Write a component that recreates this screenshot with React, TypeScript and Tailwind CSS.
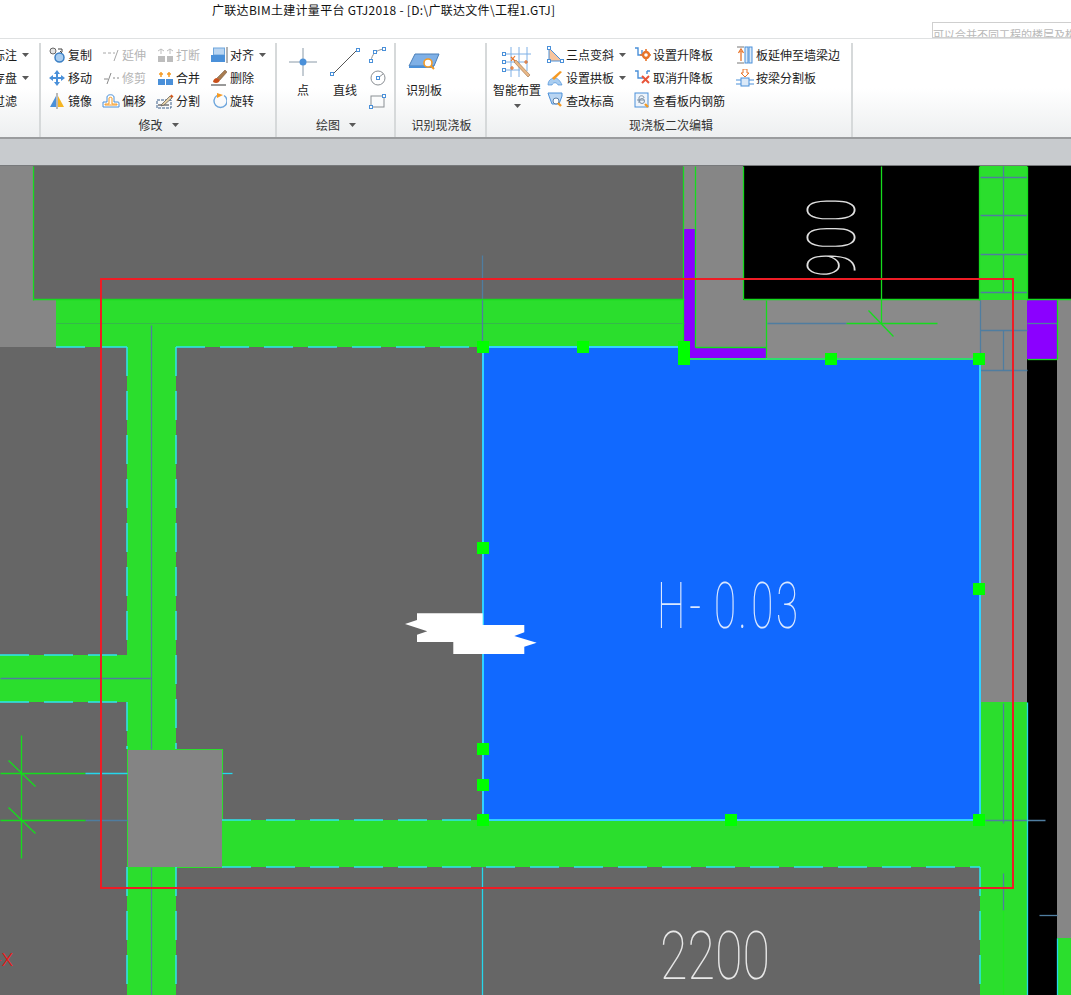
import type { ReactNode } from "react"

const blue = "#4a90d9"
const orange = "#f59a23"

const Ico = ({ children, w = 16, h = 16 }: { children: ReactNode; w?: number; h?: number }) => (
  <svg width={w} height={h} viewBox={`0 0 ${w} ${h}`} className="shrink-0" fill="none">
    {children}
  </svg>
)

const Copy = () => (
  <Ico>
    <circle cx="4" cy="4" r="3" fill="#e4e4e4" stroke="#666" />
    <circle cx="10.5" cy="10.5" r="4.5" fill="#a9cdf0" stroke="#3a7fc4" strokeWidth="1.5" />
    <path d="M9 2h4v3M11 4l2 2" stroke="#444" />
  </Ico>
)
const Extend = () => (
  <Ico>
    <path d="M0 6h3M5 6h3M10 6h2" stroke="#a8a8a8" />
    <path d="M11 14L15 3" stroke="#a8a8a8" />
  </Ico>
)
const Break = () => (
  <Ico>
    <rect x="1" y="9" width="7" height="6" fill="#bdbdbd" />
    <rect x="10" y="9" width="6" height="6" fill="#bdbdbd" />
    <path d="M4 2v5M1 4l3-2 3 2M13 2v5M10 4l3-2 3 2" stroke="#bdbdbd" />
  </Ico>
)
const Align = () => (
  <Ico w={18} h={16}>
    <rect x="3.5" y="1" width="11" height="7" fill="#b9d5f2" stroke="#6ea6dc" />
    <rect x="1" y="8" width="14" height="7" fill={blue} />
    <path d="M17 0v16" stroke="#666" />
  </Ico>
)
const Move = () => (
  <Ico>
    <path d="M8 3v10M3 8h10" stroke={blue} strokeWidth="2" />
    <path d="M8 0l3 4H5zM8 16l3-4H5zM0 8l4-3v6zM16 8l-4-3v6z" fill={blue} />
  </Ico>
)
const Trim = () => (
  <Ico>
    <path d="M1 9h4M10 8h2M14 8h2" stroke="#8a8a8a" />
    <path d="M4 14L8 3" stroke="#8a8a8a" />
  </Ico>
)
const Merge = () => (
  <Ico>
    <rect x="1" y="9" width="7" height="6" fill={blue} />
    <rect x="9" y="9" width="7" height="6" fill={blue} />
    <path d="M4 2v5M2 4h4M12 2v5M10 4h4" stroke={orange} strokeWidth="1.5" />
  </Ico>
)
const Del = () => (
  <Ico>
    <path d="M6 8l8-8 2 2-7 8z" fill="#a87c50" stroke="#6b5138" strokeWidth="0.5" />
    <path d="M2 12c0-2 2-4 4-4l3 2c-1 3-4 4-7 2z" fill="#c9501a" />
    <path d="M0 15h15" stroke="#333" />
  </Ico>
)
const Mirror = () => (
  <Ico>
    <path d="M1 14L7 3v11z" fill={blue} />
    <path d="M8 0v16" stroke="#777" />
    <path d="M9 3l6 11H9z" fill="#f5b523" />
  </Ico>
)
const Offset = () => (
  <Ico w={18} h={16}>
    <path d="M1 14V9h4V4c0-3 7-3 7 0v5h4a1 1 0 011 1v4z" fill="#fff" stroke={blue} />
    <path d="M3 12v-1h4V5c0-1 3-1 3 0v6h5v1z" stroke={orange} />
  </Ico>
)
const Split = () => (
  <Ico w={18} h={16}>
    <path d="M1 7h14v8H1z" stroke="#3b5f8a" strokeDasharray="3 1" />
    <path d="M2 12h11" stroke="#333" />
    <path d="M6 11l8-8 2 2-8 7-3 1z" fill="#e9d3a8" stroke="#555" strokeWidth="0.7" />
    <path d="M14 3l1.5-1.5 2 2L16 5z" fill="#d4581c" />
  </Ico>
)
const Rotate = () => (
  <Ico>
    <path d="M6 2.5a6.5 6.5 0 107 0" stroke="#6ea6dc" strokeWidth="1.4" />
    <path d="M6 0l6 2-6 3z" fill={orange} />
  </Ico>
)

const Sq = ({ x, y }: { x: number; y: number }) => (
  <rect x={x - 1.5} y={y - 1.5} width="3" height="3" fill="#fff" stroke={blue} />
)
const PointIcon = () => (
  <Ico w={30} h={30}>
    <path d="M15 1v28M1 15h28" stroke="#8a9aa8" />
    <circle cx="15" cy="15" r="3.5" fill={blue} />
  </Ico>
)
const LineIcon = () => (
  <Ico w={30} h={30}>
    <path d="M2 28L28 2" stroke="#555" />
    <rect x="0.5" y="25.5" width="3" height="3" fill="#fff" stroke={blue} />
    <rect x="26.5" y="1.5" width="3" height="3" fill="#fff" stroke={blue} />
  </Ico>
)
const ArcIcon = () => (
  <Ico w={18} h={18}>
    <path d="M2 15C3 8 7 4 15 3" stroke="#8a8f94" />
    <Sq x={2} y={15} />
    <Sq x={6} y={6} />
    <Sq x={15} y={3} />
  </Ico>
)
const CircleIcon = () => (
  <Ico w={18} h={18}>
    <circle cx="9" cy="9" r="7" stroke="#8a8f94" />
    <path d="M9 9l5-4" stroke="#8a8f94" />
    <Sq x={9} y={9} />
  </Ico>
)
const RectIcon = () => (
  <Ico w={18} h={18}>
    <rect x="2" y="4" width="13" height="11" stroke="#8a8f94" />
    <Sq x={2} y={15} />
    <Sq x={15} y={4} />
  </Ico>
)
const RecogIcon = () => (
  <Ico w={32} h={18}>
    <path d="M7 1h24l-5 12H1z" fill="#7fb0e6" stroke="#4a7fb8" />
    <path d="M1 13h25v2H1z" fill={blue} />
    <circle cx="20" cy="10" r="4" fill="#fff" stroke={orange} strokeWidth="1.6" />
    <path d="M23 13l3 3" stroke={orange} strokeWidth="2" />
  </Ico>
)
const SmartIcon = () => (
  <Ico w={30} h={32}>
    <path d="M9 1v30M17 1v30M25 1v24M2 8h27M2 16h24M2 24h16" stroke="#7fb0e6" />
    <Sq x={2} y={8} />
    <Sq x={2} y={16} />
    <Sq x={2} y={24} />
    <path d="M14 14l14 15-2 2-14-15z" fill="#e9b887" stroke="#8a5a30" strokeWidth="0.5" />
    <path d="M9 11l4 4M13 10l-4 5M22 16h4M24 14v4M8 22h4M10 20v4" stroke="#e8742a" strokeWidth="1.2" />
  </Ico>
)
const SlopeIcon = () => (
  <Ico w={17} h={17}>
    <path d="M2 2v13h13z" fill="#f8c49c" stroke={blue} />
    <rect x="0.5" y="0.5" width="3" height="3" fill="#fff" stroke={blue} />
    <rect x="0.5" y="13.5" width="3" height="3" fill="#fff" stroke={blue} />
    <rect x="13.5" y="13.5" width="3" height="3" fill="#fff" stroke={blue} />
  </Ico>
)
const ArchIcon = () => (
  <Ico w={17} h={17}>
    <path d="M1 16c0-6 5-7 7-7s5 2 7 7h-4c-1-3-5-3-6 0z" fill="#a9cdf0" stroke={blue} strokeWidth="0.7" />
    <path d="M5 9L13 2l2 1-8 8z" fill={orange} />
  </Ico>
)
const ElevIcon = () => (
  <Ico w={17} h={17}>
    <path d="M1 1h14v3l-3 8H5L2 4z" fill="#b9d5f2" stroke={blue} />
    <circle cx="9" cy="9" r="3" fill="#fff" stroke="#5a7fa8" />
    <path d="M11 11l3 3" stroke={orange} strokeWidth="2.4" />
  </Ico>
)
const RaiseIcon = () => (
  <Ico w={17} h={17}>
    <path d="M1 2h3v7h4V4" stroke={blue} strokeWidth="1.4" />
    <circle cx="12" cy="9" r="3" stroke="#e8742a" strokeWidth="2.4" />
    <path d="M12 3v2M12 13v2M6 9h2M16 9h1" stroke="#e8742a" strokeWidth="1.6" />
  </Ico>
)
const CancelIcon = () => (
  <Ico w={17} h={17}>
    <path d="M1 2h3v7h5M13 2h3M13 2v3" stroke={blue} strokeWidth="1.4" />
    <path d="M8 7l7 7M15 7l-7 7" stroke="#e8553a" strokeWidth="2" />
  </Ico>
)
const ViewIcon = () => (
  <Ico w={17} h={18}>
    <rect x="1" y="1" width="13" height="14" fill="#eef4fb" stroke={blue} />
    <path d="M5 11V6c0-3 5-3 5 0M3 8h7" stroke="#7a8fa5" />
    <circle cx="8" cy="9" r="2.5" stroke="#7a8fa5" />
    <path d="M11 12l3 3" stroke={orange} strokeWidth="2.4" />
  </Ico>
)
const StretchIcon = () => (
  <Ico w={16} h={18}>
    <path d="M4 15V5M1.5 7L4 3l2.5 4" stroke="#e8742a" strokeWidth="1.3" />
    <path d="M0 1h7M0 17h7" stroke="#777" />
    <rect x="8" y="1" width="3" height="16" fill="#dbe9f8" stroke={blue} />
    <rect x="12" y="1" width="3" height="16" fill="#dbe9f8" stroke={blue} />
  </Ico>
)
const BeamCutIcon = () => (
  <Ico w={18} h={18}>
    <path d="M7 0h4v4h2l-4 4-4-4h2z" fill="#fff" stroke="#e8742a" />
    <rect x="5" y="9" width="8" height="8" fill="#dbe9f8" stroke={blue} />
    <path d="M0 11h5M13 11h5M0 15h5M13 15h5" stroke={blue} />
  </Ico>
)

const Arrow = ({ className = "" }: { className?: string }) => (
  <svg width="7" height="4" viewBox="0 0 7 4" className={`shrink-0 ${className}`}>
    <path d="M0 0h7L3.5 4z" fill="#595959" />
  </svg>
)

const Tool = ({ icon, label, arrow, off }: { icon?: ReactNode; label: string; arrow?: boolean; off?: boolean }) => (
  <div className="flex h-[23px] items-center">
    {icon && <span className="mr-[3px] flex w-4 justify-center">{icon}</span>}
    <span className={`whitespace-nowrap ${off ? "text-[#b5b5b5]" : "text-[#1c1c1c]"}`}>{label}</span>
    {arrow && <Arrow className="ml-[5px]" />}
  </div>
)

const Big = ({ icon, label, w, children }: { icon: ReactNode; label: string; w: string; children?: ReactNode }) => (
  <div className={`mt-[1px] flex flex-col items-center ${w}`}>
    <div className="flex h-9 items-center justify-center">{icon}</div>
    <div className="flex h-5 items-center whitespace-nowrap text-[#1c1c1c]">{label}</div>
    {children}
  </div>
)

const Group = ({ w, label, arrow, children, labelClass = "" }: { w: string; label?: string; arrow?: boolean; children: ReactNode; labelClass?: string }) => (
  <div className={`relative flex h-full shrink-0 flex-col border-r-2 border-[#d6d9da] ${w}`}>
    <div className="flex h-[70px] items-start">{children}</div>
    <div className={`flex h-6 items-center justify-center gap-[9px] text-[#333] ${labelClass}`}>
      {label}
      {arrow && <Arrow />}
    </div>
  </div>
)

const handles = [
  [483, 347], [583, 347], [831, 359], [979, 359], [979, 589], [483, 548],
  [483, 749], [483, 785], [483, 820], [731, 820], [979, 820],
]

// x1 y1 x2 y2
const slate: number[][] = [
  [482, 255, 482, 347], [767, 323, 846, 323], [151, 325, 151, 749], [151, 867, 151, 995],
  [0, 678, 151, 678], [980, 177, 1027, 177], [980, 215, 1027, 215], [980, 254, 1027, 254], [980, 292, 1027, 292],
  [1003, 166, 1003, 177], [1003, 177, 1003, 250], [1003, 254, 1003, 292], [980, 330, 1027, 330], [980, 370, 1027, 370],
  [1003, 330, 1003, 370], [1027, 323, 1057, 323], [980, 300, 980, 370], [1003, 703, 1003, 823], [1003, 873, 1003, 910],
  [985, 820, 1045, 820], [1039, 915, 1057, 915], [85, 820, 127, 820],
]

const green: number[][] = [
  [846, 323, 937, 323], [881, 166, 881, 323], [21, 735, 21, 858], [0, 773, 85, 773],
  [0, 820, 85, 820], [868, 310, 893, 336], [8, 760, 35, 786], [8, 807, 35, 833],
  [33, 166, 33, 300], [33, 299, 684, 299], [683, 166, 683, 347], [695, 166, 695, 347], [695, 347, 766, 347],
  [743, 166, 743, 299], [743, 299, 980, 299], [766, 300, 766, 359], [979, 166, 979, 300], [1027, 166, 1027, 300],
  [1027, 299, 1071, 299], [1057, 300, 1057, 359], [1027, 359, 1057, 359],
]

const cyanDash: number[][] = [
  [176, 347, 483, 347], [56, 347, 127, 347], [0, 655, 127, 655], [0, 702, 127, 702], [127, 347, 127, 655],
  [176, 347, 176, 749], [127, 702, 127, 749], [127, 867, 127, 995], [176, 867, 176, 995], [222, 867, 980, 867],
  [980, 867, 980, 995], [222, 820, 483, 820],
]

const cyan: number[][] = [
  [483, 347, 684, 347], [483, 347, 483, 820], [483, 820, 980, 820], [980, 359, 980, 820],
]

const thinCyan: number[][] = [
  [482, 867, 482, 995], [1027, 702, 1027, 995], [1057, 938, 1057, 995], [85, 773, 127, 773], [222, 773, 232, 773],
]

const Lines = ({ data, stroke, w = 1, dash, thin }: { data: number[][]; stroke: string; w?: number; dash?: string; thin?: boolean }) => (
  <g transform={thin ? "translate(0.5 0.5)" : undefined}>
    {data.map(([x1, y1, x2, y2], i) => (
      <line key={i} x1={x1} y1={y1} x2={x2} y2={y2} stroke={stroke} strokeWidth={w} strokeDasharray={dash} />
    ))}
  </g>
)

const Cad = () => (
  <svg width="1071" height="829" viewBox="0 166 1071 829" className="block">
    <rect x="0" y="166" width="1071" height="829" fill="#666666" />
    {/* light grey slabs */}
    <rect x="0" y="166" width="33" height="134" fill="#868686" />
    <rect x="0" y="300" width="56" height="47" fill="#868686" />
    <rect x="683" y="166" width="84" height="193" fill="#868686" />
    <rect x="767" y="300" width="213" height="59" fill="#8a8a8a" />
    <rect x="980" y="300" width="47" height="402" fill="#868686" />
    <rect x="1057" y="300" width="14" height="638" fill="#868686" />
    {/* black */}
    <rect x="743" y="166" width="237" height="134" fill="#000" />
    <rect x="1027" y="166" width="44" height="134" fill="#000" />
    <rect x="1027" y="359" width="30" height="636" fill="#000" />
    {/* beams */}
    <g fill="#2bde2d">
      <rect x="56" y="300" width="628" height="47" />
      <rect x="127" y="347" width="49" height="648" />
      <rect x="0" y="655" width="127" height="47" />
      <rect x="176" y="820" width="851" height="47" />
      <rect x="980" y="166" width="47" height="134" />
      <rect x="980" y="702" width="47" height="293" />
      <rect x="1057" y="938" width="14" height="57" />
    </g>
    {/* purple */}
    <g fill="#8b00ff">
      <rect x="684" y="229" width="11" height="129" />
      <rect x="684" y="347" width="82" height="11" />
      <rect x="1027" y="300" width="30" height="59" />
    </g>
    {/* selected slab */}
    <path d="M483 347H684V359H980V820H483z" fill="#1169ff" />
    {/* column */}
    <rect x="127.5" y="749.5" width="95" height="118" fill="#848484" stroke="#2bde2d" />
    <Lines thin data={[[56, 323, 684, 323]]} stroke="#35b84a" />
    <Lines thin data={slate} stroke="#4f7da0" w={1.3} />
    <Lines thin data={green} stroke="#16dc1e" w={1.3} />
    <Lines data={cyanDash} stroke="#2ee6f0" w={1.5} dash="29 15" />
    <Lines data={cyan} stroke="#30d2ff" w={2} />
    <Lines thin data={thinCyan} stroke="#26d6ec" w={1.3} />
    <Lines data={[[684, 359, 980, 359]]} stroke="#2bde6d" w={2} />
    <Lines thin data={[[1003, 910, 1003, 995]]} stroke="#1fe81f" w={1.3} />
    {/* cad notes */}
    <g fontFamily="Roboto, sans-serif" fontWeight="100">
      <text transform="translate(657 628) scale(0.62 1)" x="0 52 92 131 152 192" fontSize="65" fill="#dbe8ff">H-0.03</text>
      <text x="660" y="979" fontSize="67" textLength="110" lengthAdjust="spacingAndGlyphs" fill="#e8e8e8">2200</text>
      <text transform="translate(855 277) rotate(-90) scale(0.67 1)" fontSize="66" letterSpacing="5" fill="#e0e0e0">900</text>
      <text x="-4" y="966" fontSize="19" fill="#f01414" fontWeight="300">-X</text>
    </g>
    <path d="M417 613.3H482.7V625H524.3V632.3L514.3 636L536.7 642.7L524.3 646.7V654H453.3V642H417V634.7L427.3 631.3L405 624L417 620z" fill="#fff" />
    <rect x="101" y="279" width="912" height="609" fill="none" stroke="#ee1c25" strokeWidth="2" />
    <g fill="#00ff00">
      {handles.map(([x, y]) => (
        <rect key={`${x}-${y}`} x={x - 6} y={y - 6} width="12" height="12" />
      ))}
      <rect x="678" y="341" width="12" height="24" />
    </g>
  </svg>
)

const App = () => {
  return (
    <div className="relative h-[995px] w-[1071px] overflow-hidden bg-white font-['Noto_Sans_CJK_SC','Liberation_Sans',sans-serif] text-[12px]">
      <div className="h-[39px] border-b border-[#dfe1e2]">
        <div className="flex h-[20px] items-center pl-[212px] text-[12px] tracking-[0.3px] text-[#111]">
          广联达BIM土建计量平台 GTJ2018 - [D:\广联达文件\工程1.GTJ]
        </div>
      </div>

      {/* leftover hint box over the title bar */}
      <div className="absolute left-[932px] top-[22px] h-4 w-[160px] overflow-hidden border border-[#cfcfcf] bg-white">
        <div className="mt-[-1px] h-[3px] w-[90px] border-t border-dashed border-[#aaa]" />
        <div className="mt-[3px] whitespace-nowrap text-[11px] leading-[12px] text-[#b8b8b8]">可以合并不同工程的楼层及构</div>
      </div>

      <div className="flex h-[100px] items-stretch border-b-2 border-[#9a9c9e] bg-gradient-to-b from-white from-50% to-[#edeff0] pt-[4px]">
        <Group w="w-[41px]">
          <div className="ml-[-7px] flex flex-col">
            <Tool label="标注" arrow />
            <Tool label="存盘" arrow />
            <Tool label="过滤" />
          </div>
        </Group>

        <Group w="w-[236px]" label="修改" arrow labelClass="pl-[1px]">
          <div className="ml-2 grid grid-cols-[54px_54px_54px_auto]">
            <Tool icon={<Copy />} label="复制" />
            <Tool icon={<Extend />} label="延伸" off />
            <Tool icon={<Break />} label="打断" off />
            <Tool icon={<Align />} label="对齐" arrow />
            <Tool icon={<Move />} label="移动" />
            <Tool icon={<Trim />} label="修剪" off />
            <Tool icon={<Merge />} label="合并" />
            <Tool icon={<Del />} label="删除" />
            <Tool icon={<Mirror />} label="镜像" />
            <Tool icon={<Offset />} label="偏移" />
            <Tool icon={<Split />} label="分割" />
            <Tool icon={<Rotate />} label="旋转" />
          </div>
        </Group>

        <Group w="w-[119px]" label="绘图" arrow labelClass="pl-[1px]">
          <Big icon={<PointIcon />} label="点" w="w-[52px]" />
          <Big icon={<LineIcon />} label="直线" w="w-[32px]" />
          <div className="ml-2 flex flex-col">
            <div className="flex h-[23px] items-center"><ArcIcon /></div>
            <div className="flex h-[23px] items-center"><CircleIcon /></div>
            <div className="flex h-[23px] items-center"><RectIcon /></div>
          </div>
        </Group>

        <Group w="w-[91px]" label="识别现浇板" labelClass="pl-[2px]">
          <Big icon={<RecogIcon />} label="识别板" w="ml-2 w-[40px]" />
        </Group>

        <Group w="w-[366px]" label="现浇板二次编辑" labelClass="pl-[4px]">
          <Big icon={<SmartIcon />} label="智能布置" w="ml-[6px] w-[48px]">
            <Arrow className="mt-1" />
          </Big>
          <div className="ml-[6px] flex w-[87px] flex-col">
            <Tool icon={<SlopeIcon />} label="三点变斜" arrow />
            <Tool icon={<ArchIcon />} label="设置拱板" arrow />
            <Tool icon={<ElevIcon />} label="查改标高" />
          </div>
          <div className="flex w-[103px] flex-col">
            <Tool icon={<RaiseIcon />} label="设置升降板" />
            <Tool icon={<CancelIcon />} label="取消升降板" />
            <Tool icon={<ViewIcon />} label="查看板内钢筋" />
          </div>
          <div className="flex flex-col">
            <Tool icon={<StretchIcon />} label="板延伸至墙梁边" />
            <Tool icon={<BeamCutIcon />} label="按梁分割板" />
          </div>
        </Group>
      </div>

      <div className="h-[27px] border-b border-[#77797b] bg-[#c8cbce]" />
      <Cad />
    </div>
  )
}

export default App
